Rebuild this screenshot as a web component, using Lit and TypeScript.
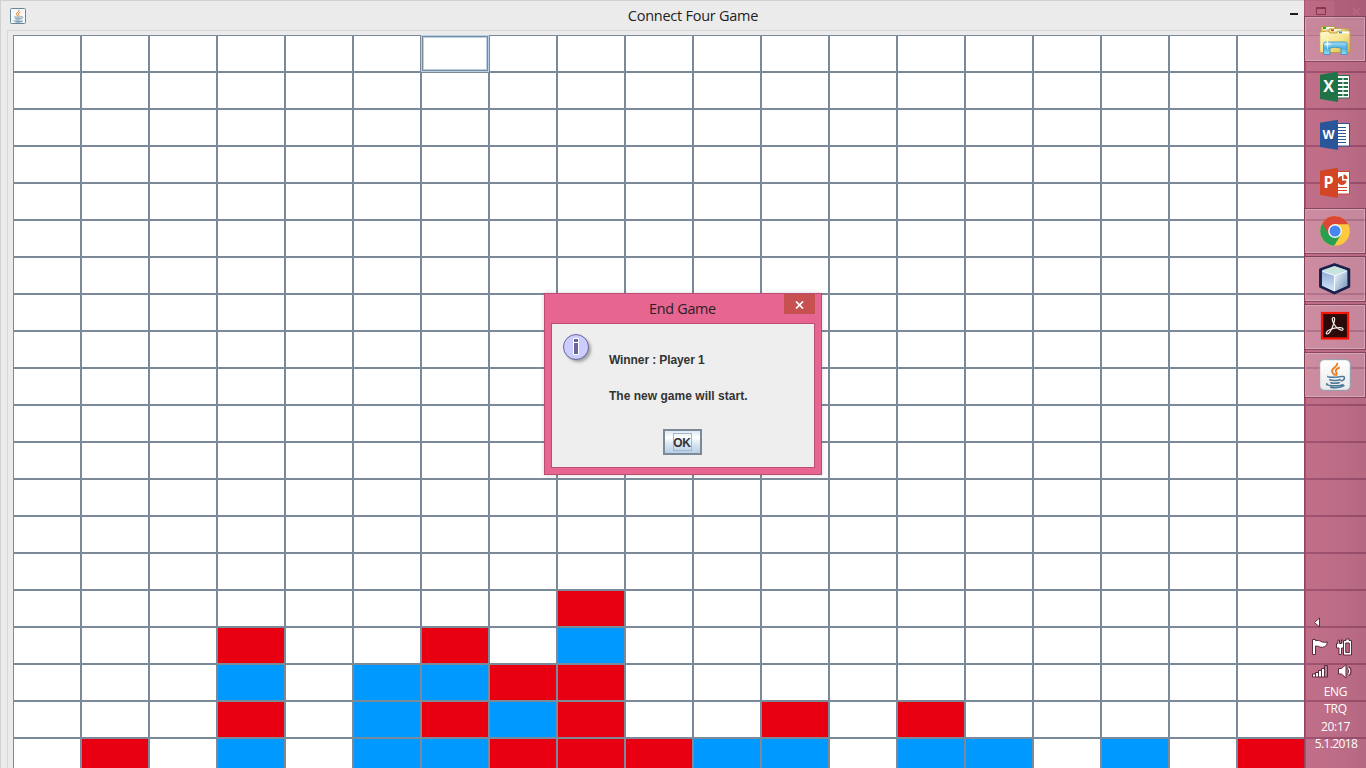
import { LitElement, html, svg, css } from "lit";
import { customElement } from "lit/decorators.js";
import { classMap } from "lit/directives/class-map.js";

// Each string is one board row: r = player 1, b = player 2, . = empty.
const EMPTY = "....................";
const ROWS: string[] = [
  ...Array(15).fill(EMPTY),
  "........r...........",
  "...r..r.b...........",
  "...b.bbrr...........",
  "...r.brbr..r.r......",
  ".r.b.bbrrrbb.bb.b.r.",
];

const officeLeaf = (color: string, letter: string, inner: unknown) => html`<svg width="32" height="32" viewBox="0 0 32 32">
  <rect x="17" y="4.5" width="13.5" height="22.5" fill="#fff" stroke=${color} />
  ${inner}
  <path d="M1 3.8 19 .8V31L1 28z" fill=${color} />
  <text x="9.6" y=${letter === "W" ? 20 : 21} text-anchor="middle" font-family="Open Sans, sans-serif" font-weight="700" font-size=${letter === "W" ? 12.5 : 16} fill="#fff">${letter}</text>
</svg>`;

const explorer = html`<svg width="32" height="32" viewBox="0 0 32 32">
  <defs>
    <linearGradient id="fold" x2="1" y2="1"><stop stop-color="#fffbd0" /><stop offset=".55" stop-color="#f5e38b" /><stop offset="1" stop-color="#d5ad3a" /></linearGradient>
    <linearGradient id="tray" x2="0" y2="1"><stop stop-color="#a8dcf4" /><stop offset=".5" stop-color="#4eb0e2" /><stop offset="1" stop-color="#9adcf5" /></linearGradient>
  </defs>
  <path d="M2 8V3.500h14V6h14v23H2z" fill="#ecd37a" stroke="#b99a45" />
  <path d="M5 4h10v2.500H5z" fill="#fff" /><path d="M4 4h3v2H4z" fill="#18bb22" />
  <path d="M10 9V5.800h17v4" fill="#f3dd87" stroke="#b99a45" stroke-width=".8" />
  <path d="M14 6.300h8v2h-8z" fill="#fff" /><path d="M12 6.300h3v1.800h-3z" fill="#dd4a26" />
  <path d="M.8 9 9 8l2 2h7V8h13v21.500H.8z" fill="url(#fold)" stroke="#bd9a3e" stroke-width=".8" />
  <path d="M21 8.500h9v1.800h-9z" fill="#fff" /><path d="M20 8.500h3v1.800h-3z" fill="#2a94ee" />
  <path d="M4.500 31.500V21q0-2 2-2h19.500q2 0 2 2v10.500h-6V25q-6-1.500-11 0v6.500z" fill="url(#tray)" stroke="#318fc1" stroke-width=".8" />
  <path d="M8.500 16l.4 4.600 4.200.4-4.200.6-.4 4.400-.6-4.400-3.500-.6 3.500-.4zM6 18.500l5 5M11 18.500l-5 5" fill="#fff" stroke="#fff" stroke-width=".3" />
</svg>`;

const excel = officeLeaf("#207347", "X", svg`<path d="M19 8h4.500M19 12h4.500M19 16h4.500M19 20h4.500M19 24h4.500M24.500 8H29M24.500 12H29M24.500 16H29M24.500 20H29M24.500 24H29" stroke="#207347" stroke-width="2" />`);
const word = officeLeaf("#2a5699", "W", svg`<path d="M19 8.500h8M19 11.500h8M19 14.500h8M19 17.500h8M19 20.500h8M19 23.500h8" stroke="#2a5699" />`);
const powerpoint = officeLeaf("#d24625", "P", svg`<path d="M23 9v4.500h4.500a4.500 4.500 0 1 1-4.500-4.500zM24.500 7.500q4 .2 4 4.500h-4z" fill="#d24625" /><path d="M19 20.500h9M19 23.500h9" stroke="#d24625" stroke-width="1.200" />`);

const chrome = html`<svg width="32" height="32" viewBox="0 0 32 32">
  <circle cx="16" cy="16" r="14.800" fill="#fdc93f" />
  <path d="M16 16 3.200 8.600A14.800 14.800 0 0 0 15.200 30.800L22 19.500z" fill="#27a052" />
  <path d="M16 16 9.700 19.500 3.200 8.600A14.800 14.800 0 0 1 29.300 9.300H16z" fill="#dc4637" />
  <circle cx="16" cy="16" r="6.900" fill="#f4f4f4" /><circle cx="16" cy="16" r="5.500" fill="#4487ee" />
</svg>`;

const netbeans = html`<svg width="32" height="32" viewBox="0 0 32 32">
  <defs>
    <linearGradient id="nl" x2="0" y2="1"><stop stop-color="#8fa9d2" /><stop offset="1" stop-color="#d5e8fa" /></linearGradient>
    <linearGradient id="nr" x2="1" y2="1"><stop stop-color="#f4f9ff" /><stop offset="1" stop-color="#6f94ba" /></linearGradient>
  </defs>
  <path d="M15.500 1.500 29.800 6.500V23.500L15.500 30 1.500 23.500V6.500z" fill="#b5cbe4" stroke="#1a2049" stroke-width="2.900" stroke-linejoin="round" />
  <path d="M3 8l12 4.500v15.800L3 22.500z" fill="url(#nl)" /><path d="M15.500 12.500 28 8v14.500l-12.500 5.800z" fill="url(#nr)" />
  <path d="M15.500 3.300 27.500 7.300 15.500 12 3.500 7.300z" fill="#c6e3dd" />
  <path d="M3.500 8.200 15.500 12.500 27.500 8.200M15.500 12.500V28" fill="none" stroke="#f6faff" stroke-width="1.100" />
</svg>`;

const acrobat = html`<svg width="32" height="32" viewBox="0 0 32 32">
  <rect x="3" y="2" width="26" height="25.500" fill="#2b0a0a" stroke="#fa1405" stroke-width="2.200" />
  <path d="M14.600 6.500c-2.300 0-1.200 4 .4 6.500 2 3.200 4.500 5.800 7.200 6.200 2.500.3 2.800-2.300-.6-2.600-4-.3-8 .8-11 2.200-3.400 1.600-4 4-2.600 4.200 2.300.2 5-5.500 6.400-9.500 1-3 2-7 .2-7z" fill="none" stroke="#f6efef" stroke-width="1.200" />
</svg>`;

const cup = svg`<path d="M18 4c1.500 3.500-5.500 5-5 8.300.3 1.900 2.200 2.500 2.600 4.200M20.800 8.500c-3.500 1.200-4.800 2.800-3.600 4.700 1 1.500.2 2.500-.8 3.500" fill="none" stroke="#ee8124" stroke-width="2" />
  <path d="M9 17.200c-2 1.400 11 1.200 13.500.2M10.200 20.500c3 1.300 8.500 1.300 11.500 0M22.500 17.500c4.200-.8 4 3.600-.8 4.500M11.300 23.500c3 1.200 6.500 1 9.500 0M8.500 24.500c-5 2 12 3.500 16 .8M11 28.200c5 .8 11.500.3 14.500-1.700" fill="none" stroke="#4c7896" stroke-width="1.500" />`;
const java = html`<svg width="32" height="32" viewBox="0 0 32 32">
  <defs><linearGradient id="jb" x2="0" y2="1"><stop stop-color="#fff" /><stop offset="1" stop-color="#e8e9ea" /></linearGradient></defs>
  <rect x=".7" y=".7" width="30.600" height="30.600" rx="4.500" fill="url(#jb)" stroke="#8d9fb1" />${cup}
</svg>`;

@customElement("game-board")
class GameBoard extends LitElement {
  static styles = css`
    :host { display: block; }
    .grid { display: grid; grid-template-columns: repeat(20, 68px); grid-auto-rows: 37px; }
    .cell { box-sizing: border-box; border: 1px solid #7a8a99; background: #fff; }
    .red { background: #e80012; }
    .blue { background: #0099ff; }
    .focus { border-color: #b8cfe5; box-shadow: inset 0 0 0 1px #7a8a99, inset 0 0 0 2px #b8cfe5; }
  `;
  render() {
    return html`<div class="grid">${ROWS.map((row, y) => [...row].map((c, x) =>
      html`<div class=${classMap({ cell: true, red: c === "r", blue: c === "b", focus: y === 0 && x === 6 })}></div>`))}</div>`;
  }
}

@customElement("task-bar")
class TaskBar extends LitElement {
  static styles = css`
    :host { display: flex; flex-direction: column; justify-content: space-between; box-sizing: border-box; width: 62px; height: 768px; padding: 16px 0;
      background: linear-gradient(90deg, rgba(174,64,99,.75), rgba(157,54,88,.75)); box-shadow: inset 1px 0 rgba(120,35,65,.3); font-family: "Open Sans", sans-serif; color: #fff; }
    .apps { display: flex; flex-direction: column; gap: 2px; }
    .app { height: 46px; box-sizing: border-box; display: flex; align-items: center; justify-content: center; }
    .app svg { display: block; }
    .running { background: rgba(255,255,255,.2); border: 1px solid rgba(110,40,66,.7); box-shadow: inset 0 0 0 1px rgba(255,255,255,.26); }
    .tray { display: flex; flex-direction: column; }
    .tray svg { display: block; }
    .label { font-size: 12px; line-height: 17px; height: 17.25px; text-align: center; letter-spacing: -.35px; padding-left: 1px; }
    .date { letter-spacing: -.65px; padding-left: 2px; }
  `;
  render() {
    const apps: [unknown, boolean][] = [[explorer, true], [excel, false], [word, false], [powerpoint, false], [chrome, true], [netbeans, true], [acrobat, true], [java, true]];
    return html`<div class="apps">${apps.map(([icon, running]) => html`<div class=${classMap({ app: true, running })}>${icon}</div>`)}</div>
      <div class="tray">
        <svg width="62" height="69" viewBox="0 0 62 69" fill="#fff" stroke="#5c2a3e" stroke-width="1">
          <path d="M15.500 4v9L10.500 8.500z" />
          <path d="M8.500 25.500h3v1.200q3.500-.8 5.500.6 1.200 1.400 6.500.7-1 5-5 5.300-3 .2-4-1l-3-.3v8.500h-3z" />
          <path d="M32.500 29.500H34v-3.500h1.500v3.500h2v-3.500H39v3.500h1v4.500h-2.500v6.500h-2.500V34h-2.500z" />
          <path d="M39.500 26.500h2.500v-1.500h3v1.500h2.500v14.500h-8z" />
          <path d="M41.700 29h3.600v9.500h-3.600z" fill="#b9667f" />
          <path d="M8.500 60h3v3h-3zM11.500 58.500h3V63h-3zM14.500 56.500h3V63h-3zM17.500 54.500h3V63h-3z" />
          <path d="M20.500 51.500h3V63h-3z" fill="#ad8695" />
          <path d="M34.500 54.500h3l4.500-4v13.500l-4.500-4h-3z" />
          <path d="M44.500 53.500q3 3.700 0 7.500" fill="none" stroke="#5c2a3e" stroke-width="3.200" /><path d="M44.500 54q2.500 3.200 0 6.500" fill="none" stroke="#fff" stroke-width="1.300" />
        </svg>
        <div class="label">ENG</div><div class="label">TRQ</div><div class="label">20:17</div><div class="label date">5.1.2018</div>
      </div>`;
  }
}

@customElement("end-dialog")
class EndDialog extends LitElement {
  static styles = css`
    :host { display: flex; flex-direction: column; box-sizing: border-box; width: 278px; height: 182px; padding: 0 6px 6px; background: #e66591; border: 1px solid #bb4c72; box-shadow: 0 0 4px rgba(0,0,0,.18); }
    .bar { display: grid; grid-template-columns: 31px 1fr 31px; height: 29px; align-items: start; }
    .title { grid-column: 2; text-align: center; font: 14.4px/29px "Open Sans", sans-serif; letter-spacing: -.3px; color: #2b1f25; padding-right: 1px; }
    .close { height: 20px; background: #c75050; display: flex; align-items: center; justify-content: center; padding-top: 1px; box-sizing: border-box; }
    .body { flex: 1; display: grid; grid-template-columns: 57px 1fr; grid-template-rows: 27px 18px 18px 18px 1fr; background: #eee; border: 1px solid #bb4c72; font: bold 12px/18px "Liberation Sans", Arial, sans-serif; color: #333; }
    .icon { grid-area: 1 / 1 / 4 / 2; padding: 8px 0 0 9px; }
    .first { grid-area: 2 / 2; letter-spacing: -.1px; }
    .second { grid-area: 4 / 2; letter-spacing: .02px; }
    .actions { grid-area: 5 / 1 / 6 / 3; display: flex; justify-content: center; align-items: flex-start; padding: 24px 2px 0 0; }
    .ok { box-sizing: border-box; width: 39px; height: 26px; border: 2px solid #7a8a99; background: linear-gradient(#dde8f3, #fff 30%, #dde8f3 55%, #b8cfe5); display: flex; align-items: center; justify-content: center; }
    .ring { box-sizing: border-box; width: 19px; height: 18px; border: 1px solid #a3b8cc; display: flex; align-items: center; justify-content: center; letter-spacing: -.2px; padding-top: 1px; }
  `;
  render() {
    return html`<div class="bar"><span class="title">End Game</span>
        <span class="close"><svg width="9" height="8" viewBox="0 0 9 8"><path d="M1 .5l7 7M8 .5l-7 7" stroke="#fff" stroke-width="1.700" /></svg></span></div>
      <div class="body">
        <div class="icon"><svg width="34" height="34" viewBox="0 0 34 34">
          <defs><filter id="s"><feGaussianBlur stdDeviation="1.500" /></filter></defs>
          <circle cx="17.500" cy="17.500" r="12.500" fill="#777" opacity=".65" filter="url(#s)" />
          <circle cx="15" cy="15" r="12.500" fill="#ccf" stroke="#669" />
          <path d="M12.500 6.500h5v4h-5zM12.500 10.500h5v12h-5z" fill="#669" stroke="#fff" />
        </svg></div>
        <div class="first">Winner : Player 1</div><div class="second">The new game will start.</div>
        <div class="actions"><div class="ok"><span class="ring">OK</span></div></div>
      </div>`;
  }
}

@customElement("app-root")
class AppRoot extends LitElement {
  static styles = css`
    :host { display: block; position: relative; width: 1366px; height: 768px; overflow: hidden; background: #ebebeb; }
    .window { box-sizing: border-box; width: 1386px; height: 800px; border: 1px solid #d1d1d1; padding-left: 6px; }
    .titlebar { display: grid; grid-template-columns: 18px 1338px; align-items: center; height: 29px; width: 1359px; padding-left: 3px; box-sizing: border-box; }
    .titlebar svg { display: block; }
    .head { display: grid; grid-template-columns: 1fr 76px; align-items: center; }
    .title { text-align: center; font: 14.500px/29px "Open Sans", sans-serif; letter-spacing: -.25px; color: #222; padding-left: 68px; }
    .content { border-top: 1px solid #d6d6d6; border-left: 1px solid #d6d6d6; padding: 4px 0 0 5px; }
    .dialog { position: absolute; left: 544px; top: 293px; }
    .taskbar { position: absolute; left: 1304px; top: 0; }
  `;
  render() {
    return html`<div class="window">
        <div class="titlebar">
          <svg width="16" height="16" viewBox="0 0 32 32"><rect x="1" y="1" width="30" height="30" rx="2" fill="#f6f8fa" stroke="#66879b" stroke-width="2" />${cup}</svg>
          <div class="head"><span class="title">Connect Four Game</span>
            <svg width="76" height="29" viewBox="0 0 76 29"><path d="M0 12h8v2H0z" fill="#1c1c1c" /><path d="M26.500 6.500h9v7h-9zM26 7.500h10" fill="none" stroke="#222" /><path d="M44 0h32v19H44z" fill="#cfcfcf" /><path d="M63 7l7 7M70 7l-7 7" stroke="#fff" stroke-width="1.500" /></svg>
          </div>
        </div>
        <div class="content"><game-board></game-board></div>
      </div>
      <end-dialog class="dialog"></end-dialog>
      <task-bar class="taskbar"></task-bar>`;
  }
}
